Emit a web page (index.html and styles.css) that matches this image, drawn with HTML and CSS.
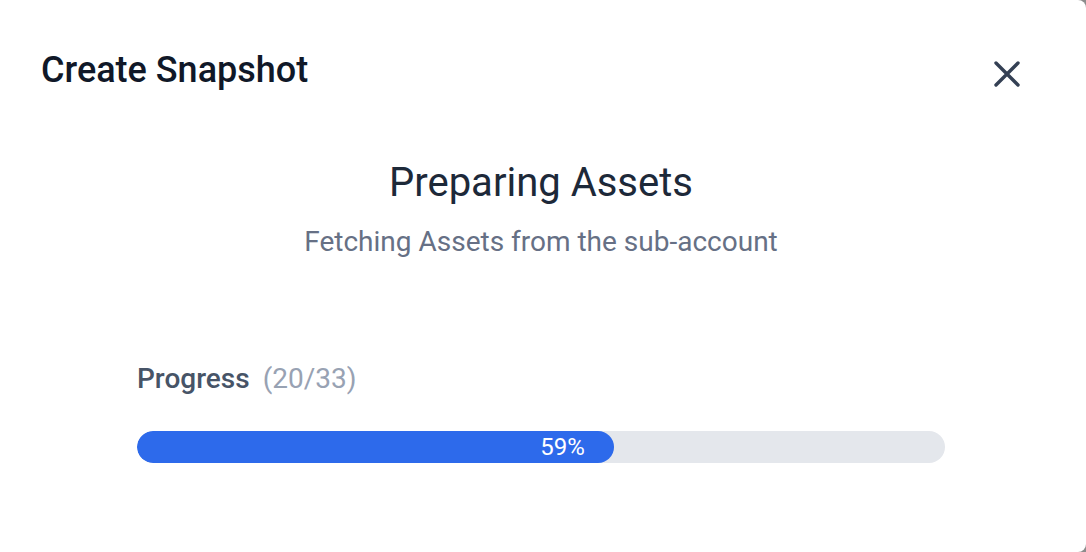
FILE: index.html
```html
<!DOCTYPE html>
<html>
<head>
<meta charset="utf-8">
<link rel="stylesheet" href="styles.css">
</head>
<body>
<div class="modal">
  <div class="header">
    <h1 class="title">Create Snapshot</h1>
    <button class="close" aria-label="Close">
      <svg width="26" height="26" viewBox="0 0 26 26"><path d="M2 2 L24 24 M24 2 L2 24" stroke="#344054" stroke-width="3.4" stroke-linecap="round" fill="none"/></svg>
    </button>
  </div>
  <div class="body">
    <h2 class="heading">Preparing Assets</h2>
    <p class="sub">Fetching Assets from the sub-account</p>
    <div class="progress">
      <div class="progress-label"><span class="pl-main">Progress</span><span class="pl-count">(20/33)</span></div>
      <div class="bar"><div class="fill" style="width:59%"><span class="pct">59%</span></div></div>
    </div>
  </div>
</div>
</body>
</html>
```
FILE: styles.css
```css
html, body { margin: 0; padding: 0; }
body {
  background: #8c8c8c;
  width: 1086px;
  height: 552px;
  overflow: hidden;
  font-family: Roboto, "Liberation Sans", sans-serif;
}
.modal {
  background: #fff;
  width: 1086px;
  height: 552px;
  border-radius: 0 8px 8px 0;
  box-sizing: border-box;
}
.header {
  display: flex;
  justify-content: space-between;
  align-items: flex-start;
  padding: 48px 66px 0 41px;
}
.title {
  margin: 0;
  font-size: 36px;
  font-weight: 500;
  color: #101828;
  line-height: 44px;
}
.close {
  border: 0;
  background: none;
  padding: 0;
  margin-top: 13px;
  width: 26px;
  height: 26px;
  display: block;
}
.close svg { display: block; }
.body {
  display: flex;
  flex-direction: column;
  align-items: center;
  padding: 0 141px 0 137px;
}
.heading {
  margin: 67px 0 0;
  font-size: 40px;
  font-weight: 400;
  color: #1d2939;
  line-height: 48px;
}
.sub {
  margin: 17px 0 0;
  font-size: 28px;
  color: #667085;
  line-height: 36px;
}
.progress {
  align-self: stretch;
  margin-top: 101px;
}
.progress-label {
  display: flex;
  gap: 13px;
  font-size: 28px;
  line-height: 36px;
}
.pl-main { font-weight: 500; color: #475467; }
.pl-count { color: #98a2b3; }
.bar {
  margin-top: 34px;
  height: 32px;
  background: #e4e7ec;
  border-radius: 16px;
  overflow: hidden;
}
.fill {
  height: 100%;
  background: #2d6aeb;
  border-radius: 16px;
  display: flex;
  justify-content: flex-end;
  align-items: center;
  padding-right: 29px;
  box-sizing: border-box;
}
.pct {
  color: #fff;
  font-size: 24px;
  line-height: 32px;
}
```
